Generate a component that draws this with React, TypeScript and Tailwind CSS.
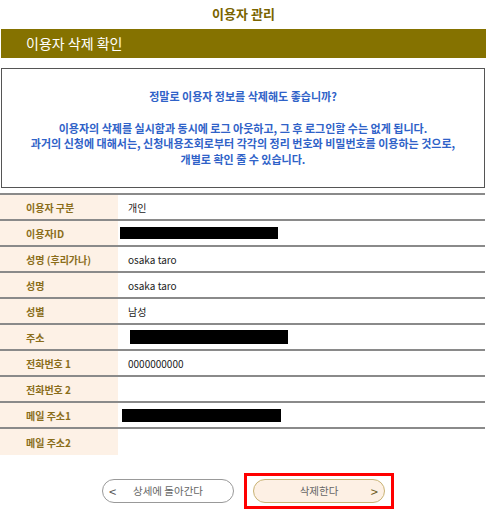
import React from "react";

const rows: { label: string; value?: string; redact?: { ml: number; w: number; h: number } }[] = [
  { label: "이용자 구분", value: "개인" },
  { label: "이용자ID", redact: { ml: 2, w: 158, h: 12 } },
  { label: "성명 (후리가나)", value: "osaka taro" },
  { label: "성명", value: "osaka taro" },
  { label: "성별", value: "남성" },
  { label: "주소", redact: { ml: 12, w: 158, h: 14 } },
  { label: "전화번호 1", value: "0000000000" },
  { label: "전화번호 2" },
  { label: "메일 주소1", redact: { ml: 4, w: 159, h: 13 } },
  { label: "메일 주소2" },
];

export default function App() {
  return (
    <div
      className="w-[487px] h-[510px] bg-white overflow-hidden"
      style={{ fontFamily: '"Noto Sans CJK KR", "Noto Sans", sans-serif' }}
    >
      {/* ── page title ── */}
      <div className="h-[27px] pt-[1px] flex items-center justify-center text-[13px] font-bold text-[#7a6400]">
        이용자 관리
      </div>

      {/* ── section bar ── */}
      <div className="mt-[2px] mx-[1px] h-[29px] bg-[#857200] flex items-center pl-[25px] text-[14px] text-white">
        이용자 삭제 확인
      </div>

      {/* ── confirm message ── */}
      <div className="mt-[10px] ml-[1px] w-[484px] h-[120px] border border-[#555] flex flex-col items-center justify-center text-[11px] font-bold text-[#2f62c8] leading-[15.5px] text-center">
        <p>정말로 이용자 정보를 삭제해도 좋습니까?</p>
        <p className="mt-[16px]">이용자의 삭제를 실시함과 동시에 로그 아웃하고, 그 후 로그인할 수는 없게 됩니다.</p>
        <p>과거의 신청에 대해서는, 신청내용조회로부터 각각의 정리 번호와 비밀번호를 이용하는 것으로,</p>
        <p>개별로 확인 줄 수 있습니다.</p>
      </div>

      {/* ── user info table ── */}
      <div className="mt-[5px] w-[485px] border-t-2 border-[#8a8a8a]">
        {rows.map((r, i) => (
          <div
            key={r.label}
            className={`flex h-[26px] ${i < rows.length - 1 ? "border-b-2 border-[#8a8a8a]" : ""}`}
          >
            <div className="w-[118px] shrink-0 bg-[#fdf1e6] flex items-center pl-[26px] text-[10px] font-bold text-[#8a6d1a]">
              {r.label}
            </div>
            <div className="flex items-center pl-[10px] text-[10px] text-[#222]">
              {r.value}
              {r.redact && (
                <div
                  className="bg-black"
                  style={{ marginLeft: r.redact.ml - 10, width: r.redact.w, height: r.redact.h }}
                />
              )}
            </div>
          </div>
        ))}
      </div>

      {/* ── actions ── */}
      <div className="mt-[18px] flex items-center pl-[102px] gap-[10px]">
        <button className="relative w-[132px] h-[24px] rounded-full border border-[#999] text-[10.5px] text-[#666] flex items-center justify-center">
          <span className="absolute left-[6px] text-[13px] text-[#555] leading-none">&lt;</span>
          상세에 돌아간다
        </button>
        <div className="border-[3px] border-[#f00] px-[6px] py-[3px]">
          <button className="relative w-[132px] h-[24px] rounded-full border border-[#c9b374] bg-[#fdf0e4] text-[10.5px] text-[#666] flex items-center justify-center">
            삭제한다
            <span className="absolute right-[6px] text-[13px] text-[#6b5a20] leading-none">&gt;</span>
          </button>
        </div>
      </div>
    </div>
  );
}
